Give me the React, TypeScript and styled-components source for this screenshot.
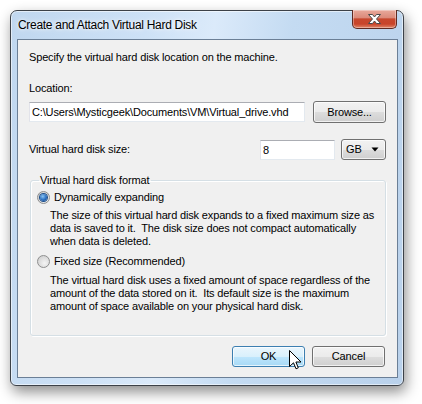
import React from "react";
import styled, { createGlobalStyle } from "styled-components";

const Global = createGlobalStyle`
  html, body { margin: 0; padding: 0; background: #ffffff; }
  body { font-family: "Liberation Sans", Arial, sans-serif; font-size: 11px; letter-spacing: -0.15px; color: #000; }
  * { box-sizing: border-box; }
`;

const Page = styled.div`
  width: 422px;
  height: 404px;
  padding: 10px 0 0 10px;
  background: #ffffff;
`;

const Window = styled.div`
  width: 394px;
  height: 376px;
  display: flex;
  flex-direction: column;
  border: 1px solid #3c4148;
  border-radius: 7px 7px 6px 6px;
  padding: 0 5px 7px 6px;
  background: linear-gradient(100deg, #c0d7ef 0%, #cde1f6 30%, #dbeafa 45%, #c4dbf2 62%, #b9d1eb 100%);
  box-shadow: 2px 6px 14px rgba(0,0,0,0.45), inset 0 0 0 1px rgba(255,255,255,0.55);
`;

const TitleBar = styled.div`
  height: 28px;
  display: flex;
  align-items: flex-start;
  justify-content: space-between;
`;

const Title = styled.div`
  margin-top: 7px;
  margin-left: 1px;
  font-size: 12px;
  letter-spacing: -0.3px;
  line-height: 15px;
  color: #000;
  text-shadow: 0 0 6px rgba(255,255,255,0.9), 0 0 3px rgba(255,255,255,0.9);
`;

const CloseButton = styled.div`
  margin-top: -1px;
  margin-right: 1px;
  width: 45px;
  height: 19px;
  display: flex;
  align-items: center;
  justify-content: center;
  border: 1px solid #5f2a22;
  border-top: none;
  border-radius: 0 0 5px 5px;
  background: linear-gradient(#e8a99b 0%, #dc8b7b 42%, #c7472d 50%, #c8442a 78%, #e0876a 100%);
  box-shadow: inset 0 0 0 1px rgba(255,255,255,0.35);
`;

const Client = styled.div`
  flex: 1;
  display: flex;
  flex-direction: column;
  border: 1px solid #6b7f96;
  background: #f0f0f0;
  padding: 10px 11px 10px 11px;
`;

const Text = styled.div<{ $mt?: number }>`
  line-height: 15px;
  margin-top: ${(p) => p.$mt ?? 0}px;
  white-space: nowrap;
`;

const Row = styled.div<{ $mt?: number }>`
  display: flex;
  align-items: center;
  margin-top: ${(p) => p.$mt ?? 0}px;
`;

const TextBox = styled.div<{ $w: number }>`
  width: ${(p) => p.$w}px;
  height: 20px;
  background: #ffffff;
  border: 1px solid #dbdfe6;
  border-top-color: #abadb3;
  border-left-color: #e2e3ea;
  border-right-color: #e3e9ef;
  border-bottom-color: #e3e9ef;
  padding: 0 2px;
  line-height: 18px;
  white-space: nowrap;
  overflow: hidden;
`;

const Spacer = styled.div`
  flex: 1;
`;

const Button = styled.div<{ $default?: boolean; $w?: number; $h?: number }>`
  position: relative;
  width: ${(p) => p.$w ?? 73}px;
  height: ${(p) => p.$h ?? 21}px;
  display: flex;
  align-items: center;
  justify-content: center;
  border: 1px solid ${(p) => (p.$default ? "#3c7fb1" : "#707070")};
  border-radius: 3px;
  background: ${(p) =>
    p.$default
      ? "linear-gradient(#eaf6fd 0%, #d9f0fc 50%, #bee6fd 51%, #a7d9f5 100%)"
      : "linear-gradient(#f2f2f2 0%, #ebebeb 50%, #dddddd 51%, #cfcfcf 100%)"};
  box-shadow: inset 0 0 0 1px rgba(255,255,255,0.7);
  line-height: 15px;
`;

const Select = styled(Button)`
  justify-content: space-between;
  margin-left: 6px;
  padding: 0 6px 0 4px;
`;

const GroupBox = styled.fieldset`
  margin: 13px 0 0 1px;
  padding: 2px 6px 0 6px;
  height: 163px;
  border: 1px solid #d5dfe5;
  border-radius: 3px;
  box-shadow: inset 1px 1px 0 #ffffff, 1px 1px 0 #ffffff;
`;

const Legend = styled.legend`
  margin-left: 2px;
  padding: 0 2px 0 1px;
  line-height: 15px;
`;

const RadioRow = styled.div<{ $mt?: number }>`
  display: flex;
  align-items: center;
  gap: 4px;
  line-height: 15px;
  margin-top: ${(p) => p.$mt ?? 0}px;
`;

const RadioCircle = styled.span<{ $checked?: boolean }>`
  width: 13px;
  height: 13px;
  border-radius: 50%;
  border: 1px solid #8e8f8f;
  background: radial-gradient(circle at 60% 65%, #f4f4f4 0%, #dcdcdc 55%, #c8c8c8 100%);
  display: flex;
  align-items: center;
  justify-content: center;
  flex: none;
  &::after {
    content: "";
    display: ${(p) => (p.$checked ? "block" : "none")};
    width: 7px;
    height: 7px;
    border-radius: 50%;
    background: radial-gradient(circle at 40% 35%, #8ac4f2 0%, #2a6fc0 55%, #0f3f80 100%);
    box-shadow: 0 0 0 1px #1c4e8a;
  }
`;

const Description = styled.div<{ $mt?: number }>`
  margin: ${(p) => p.$mt ?? 4}px 0 0 13px;
  line-height: 13px;
  white-space: nowrap;
`;

const ButtonRow = styled.div`
  margin-top: auto;
  display: flex;
  justify-content: flex-end;
  gap: 7px;
  padding-right: 1px;
`;

const Cursor = styled.svg`
  position: absolute;
  left: 56px;
  top: 3px;
`;

const CloseGlyph = () => (
  <svg width="15" height="12" viewBox="0 0 15 12">
    <path
      d="M1.5 1.5 H5.5 L7.5 4 L9.5 1.5 H13.5 L9.5 6 L13.5 10.5 H9.5 L7.5 8 L5.5 10.5 H1.5 L5.5 6 Z"
      fill="#ffffff"
      stroke="#4a4a4a"
      strokeWidth="1"
      strokeLinejoin="round"
    />
  </svg>
);

const Arrow = () => (
  <svg width="8" height="5" viewBox="0 0 8 5">
    <path d="M0.5 0.5 H7.5 L4 4.5 Z" fill="#000" />
  </svg>
);

export default function App() {
  return (
    <>
      <Global />
      <Page>
        <Window>
          <TitleBar>
            <Title>Create and Attach Virtual Hard Disk</Title>
            <CloseButton>
              <CloseGlyph />
            </CloseButton>
          </TitleBar>
          <Client>
            <Text>Specify the virtual hard disk location on the machine.</Text>
            <Text $mt={16}>Location:</Text>
            <Row $mt={5}>
              <TextBox $w={276}>C:\Users\Mysticgeek\Documents\VM\Virtual_drive.vhd</TextBox>
              <Spacer />
              <Button $w={73} $h={22}>Browse...</Button>
            </Row>
            <Row $mt={16}>
              <Text>Virtual hard disk size:</Text>
              <Spacer />
              <TextBox $w={75}>8</TextBox>
              <Select $w={45} $h={21}>
                <span>GB</span>
                <Arrow />
              </Select>
            </Row>
            <GroupBox>
              <Legend>Virtual hard disk format</Legend>
              <RadioRow>
                <RadioCircle $checked />
                <span>Dynamically expanding</span>
              </RadioRow>
              <Description>
                The size of this virtual hard disk expands to a fixed maximum size as
                <br />
                data is saved to it.&nbsp; The disk size does not compact automatically
                <br />
                when data is deleted.
              </Description>
              <RadioRow $mt={6}>
                <RadioCircle />
                <span>Fixed size (Recommended)</span>
              </RadioRow>
              <Description $mt={5}>
                The virtual hard disk uses a fixed amount of space regardless of the
                <br />
                amount of the data stored on it.&nbsp; Its default size is the maximum
                <br />
                amount of space available on your physical hard disk.
              </Description>
            </GroupBox>
            <ButtonRow>
              <Button $default>
                OK
                <Cursor width="13" height="20" viewBox="0 0 13 20">
                  <path
                    d="M0.5 0.5 L0.5 16.5 L4.5 12.8 L7 18.8 L9.3 17.8 L6.9 12 L12 12 Z"
                    fill="#ffffff"
                    stroke="#000000"
                    strokeWidth="1"
                    strokeLinejoin="miter"
                  />
                </Cursor>
              </Button>
              <Button>Cancel</Button>
            </ButtonRow>
          </Client>
        </Window>
      </Page>
    </>
  );
}
